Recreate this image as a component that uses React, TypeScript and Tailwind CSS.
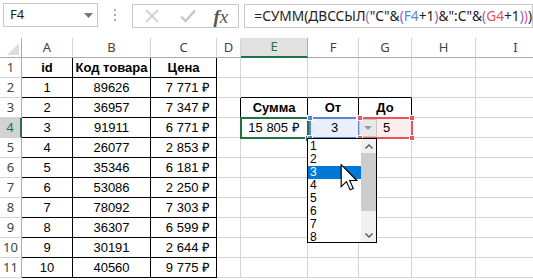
import React from 'react';

// column widths in px: row header, A..I
const COLS = [22, 51, 78, 66, 24, 67, 51, 53, 64, 80];
const LETTERS = ['A', 'B', 'C', 'D', 'E', 'F', 'G', 'H', 'I'];

const DATA: [string, string, string][] = [
  ['1', '89626', '7 771 ₽'],
  ['2', '36957', '7 347 ₽'],
  ['3', '91911', '6 771 ₽'],
  ['4', '26077', '2 853 ₽'],
  ['5', '35346', '6 181 ₽'],
  ['6', '53086', '2 250 ₽'],
  ['7', '78092', '7 303 ₽'],
  ['8', '36307', '6 599 ₽'],
  ['9', '30191', '2 644 ₽'],
  ['10', '40560', '9 775 ₽'],
];

const blackRight = (r: number, c: number) =>
  (r >= 1 && r <= 11 && c >= 1 && c <= 3) || ((r === 3 || r === 4) && c >= 4 && c <= 7);
const blackBottom = (r: number, c: number) =>
  (r >= 1 && r <= 11 && c >= 1 && c <= 3) || (r >= 2 && r <= 4 && c >= 5 && c <= 7);

function cellContent(r: number, c: number): { text: string; bold?: boolean; align: string } | null {
  if (r === 1 && c === 1) return { text: 'id', bold: true, align: 'justify-center' };
  if (r === 1 && c === 2) return { text: 'Код товара', bold: true, align: 'justify-center' };
  if (r === 1 && c === 3) return { text: 'Цена', bold: true, align: 'justify-center' };
  if (r >= 2 && r <= 11 && c >= 1 && c <= 3) {
    const row = DATA[r - 2];
    if (c === 3) return { text: row[2], align: 'justify-end pr-[6px]' };
    return { text: row[c - 1], align: 'justify-center' };
  }
  if (r === 3 && c === 5) return { text: 'Сумма', bold: true, align: 'justify-center' };
  if (r === 3 && c === 6) return { text: 'От', bold: true, align: 'justify-center' };
  if (r === 3 && c === 7) return { text: 'До', bold: true, align: 'justify-center' };
  if (r === 4 && c === 5) return { text: '15 805 ₽', align: 'justify-center' };
  return null;
}

const Handle = ({ className }: { className: string }) => (
  <div className={`absolute w-[6px] h-[6px] border border-white ${className}`} />
);

function Cursor() {
  return (
    <svg className="absolute left-[340px] top-[126px]" width="18" height="27" viewBox="0 0 12 19">
      <path
        d="M0.5 0.5 L0.5 16 L4.2 12.4 L6.8 18.2 L9 17.2 L6.5 11.6 L11.5 11.6 Z"
        fill="#fff"
        stroke="#000"
        strokeWidth="0.8"
        strokeLinejoin="miter"
      />
    </svg>
  );
}

export default function App() {
  return (
    <div className="w-[533px] h-[280px] overflow-hidden bg-white relative font-['Liberation_Sans',sans-serif]">
      {/* formula bar */}
      <div className="flex items-start h-[38px] pt-[3px]">
        <div className="ml-[3px] w-[97px] h-[24px] border border-[#c6c6c6] flex items-center justify-between pl-[6px] pr-[4px]">
          <span className="font-['Noto_Sans',sans-serif] text-[13px] text-[#222]">F4</span>
          <svg width="9" height="5" viewBox="0 0 9 5"><path d="M0 0 H9 L4.5 5 Z" fill="#777" /></svg>
        </div>
        <div className="w-[34px] h-[24px] flex flex-col items-center justify-center gap-[3px]">
          <div className="w-[2px] h-[2px] bg-[#aaa]" />
          <div className="w-[2px] h-[2px] bg-[#aaa]" />
          <div className="w-[2px] h-[2px] bg-[#aaa]" />
        </div>
        <div className="w-[110px] h-[24px] mt-[1px] border border-[#c6c6c6] flex items-center">
          <svg className="ml-[11px]" width="16" height="16" viewBox="0 0 16 16">
            <path d="M2 2 L14 14 M14 2 L2 14" stroke="#c8c8c8" strokeWidth="1.6" />
          </svg>
          <svg className="ml-[20px]" width="16" height="14" viewBox="0 0 16 14">
            <path d="M1 7.5 L5.5 12 L15 1.5" stroke="#c8c8c8" strokeWidth="2.4" fill="none" />
          </svg>
          <span className="ml-[18px] font-['Liberation_Serif',serif] italic text-[19px] leading-none text-[#555]">
            <span className="font-bold">f</span>x
          </span>
        </div>
        <div className="ml-[5px] flex-1 h-[24px] mt-[1px] border border-[#c6c6c6] flex items-center pl-[9px] whitespace-nowrap font-['Noto_Sans',sans-serif] text-[13.7px] text-[#222]">
          =СУММ(ДВССЫЛ<span className="text-[#d45a9c]">(</span>"С"&amp;<span className="text-[#8a5fc4]">(</span>
          <span className="text-[#5b87db]">F4</span>+1<span className="text-[#8a5fc4]">)</span>&amp;":С"&amp;
          <span className="text-[#8a5fc4]">(</span><span className="text-[#e4585d]">G4</span>+1
          <span className="text-[#8a5fc4]">)</span><span className="text-[#d45a9c]">)</span>)
        </div>
      </div>

      {/* sheet */}
      <div className="relative">
        <div
          className="grid"
          style={{ gridTemplateColumns: COLS.map((w) => `${w}px`).join(' '), gridAutoRows: '20px' }}
        >
          {/* header row */}
          <div className="relative border-r border-b border-[#ababab]">
            <svg className="absolute right-[2px] bottom-[2px]" width="12" height="12" viewBox="0 0 12 12">
              <path d="M12 0 V12 H0 Z" fill="#dfdfdf" />
            </svg>
          </div>
          {LETTERS.map((l) =>
            l === 'E' ? (
              <div
                key={l}
                className="flex items-center justify-center bg-[#e1e1e1] border-r border-[#ababab] border-b-2 border-b-[#217346] text-[#217346] font-['Noto_Sans',sans-serif] text-[13px]"
              >
                {l}
              </div>
            ) : (
              <div
                key={l}
                className="flex items-center justify-center border-r border-b border-r-[#d4d4d4] border-b-[#ababab] text-[#444] font-['Noto_Sans',sans-serif] text-[13px]"
              >
                {l}
              </div>
            )
          )}

          {Array.from({ length: 11 }, (_, i) => i + 1).map((r) => (
            <React.Fragment key={r}>
              {r === 4 ? (
                <div className="flex items-center justify-center bg-[#d2d2d2] border-b border-b-[#d4d4d4] border-r-2 border-r-[#217346] text-[#217346] font-['Noto_Sans',sans-serif] text-[13px]">
                  {r}
                </div>
              ) : (
                <div className="flex items-center justify-center border-b border-r border-b-[#d4d4d4] border-r-[#ababab] text-[#444] font-['Noto_Sans',sans-serif] text-[13px]">
                  {r}
                </div>
              )}
              {LETTERS.map((_, ci) => {
                const c = ci + 1;
                const content = cellContent(r, c);
                const br = blackRight(r, c) ? 'border-r-black' : 'border-r-[#d4d4d4]';
                const bb = blackBottom(r, c) ? 'border-b-black' : 'border-b-[#d4d4d4]';
                return (
                  <div
                    key={c}
                    className={`flex items-center border-r border-b ${br} ${bb} text-[13px] text-black ${content ? content.align : ''} ${content?.bold ? 'font-bold' : ''}`}
                  >
                    {content?.text}
                  </div>
                );
              })}
            </React.Fragment>
          ))}
        </div>

        {/* E4 active cell */}
        <div className="absolute left-[240px] top-[79px] w-[69px] h-[22px] border-2 border-[#217346]">
          <div className="absolute right-[-5px] bottom-[-5px] w-[7px] h-[7px] bg-[#217346] border border-white" />
        </div>

        {/* F4 reference */}
        <div className="absolute left-[309px] top-[79px] w-[51px] h-[22px] border-2 border-[#5b87db] bg-[#eaf0fb] flex items-center justify-center text-[13px] text-black">
          3
          <Handle className="bg-[#5b87db] left-[-4px] top-[-4px]" />
          <Handle className="bg-[#5b87db] right-[-4px] top-[-4px]" />
          <Handle className="bg-[#5b87db] left-[-4px] bottom-[-4px]" />
          <Handle className="bg-[#5b87db] right-[-4px] bottom-[-4px]" />
        </div>

        {/* G4 reference */}
        <div className="absolute left-[359px] top-[79px] w-[54px] h-[22px] border-2 border-[#e4585d] bg-[#fdeded] flex items-center text-[13px] text-black">
          <div className="w-[18px] h-[18px] ml-[-2px] bg-[#e8e8e8] border border-[#c6c6c6] flex items-center justify-center">
            <svg width="8" height="4" viewBox="0 0 8 4"><path d="M0 0 H8 L4 4 Z" fill="#999" /></svg>
          </div>
          <span className="ml-[6px]">5</span>
          <Handle className="bg-[#e4585d] left-[-4px] top-[-4px]" />
          <Handle className="bg-[#e4585d] right-[-4px] top-[-4px]" />
          <Handle className="bg-[#e4585d] left-[-4px] bottom-[-4px]" />
          <Handle className="bg-[#e4585d] right-[-4px] bottom-[-4px]" />
        </div>

        {/* dropdown list */}
        <div className="absolute left-[307px] top-[100px] w-[70px] h-[105px] bg-white border border-black flex">
          <div className="flex-1 flex flex-col pt-[1px]">
            {['1', '2', '3', '4', '5', '6', '7', '8'].map((v) => (
              <div
                key={v}
                className={`h-[13px] leading-[13px] pl-[2px] text-[12px] ${v === '3' ? 'bg-[#0078d7] text-white' : 'text-black'}`}
              >
                {v}
              </div>
            ))}
          </div>
          <div className="w-[15px] bg-[#f0f0f0] flex flex-col items-center">
            <div className="h-[14px] flex items-center justify-center">
              <svg width="8" height="5" viewBox="0 0 8 5"><path d="M0.5 4.5 L4 1 L7.5 4.5" stroke="#555" strokeWidth="1.4" fill="none" /></svg>
            </div>
            <div className="w-[15px] h-[58px] bg-[#cdcdcd]" />
            <div className="flex-1" />
            <div className="h-[14px] flex items-center justify-center">
              <svg width="8" height="5" viewBox="0 0 8 5"><path d="M0.5 0.5 L4 4 L7.5 0.5" stroke="#555" strokeWidth="1.4" fill="none" /></svg>
            </div>
          </div>
        </div>

        <Cursor />
      </div>
    </div>
  );
}
